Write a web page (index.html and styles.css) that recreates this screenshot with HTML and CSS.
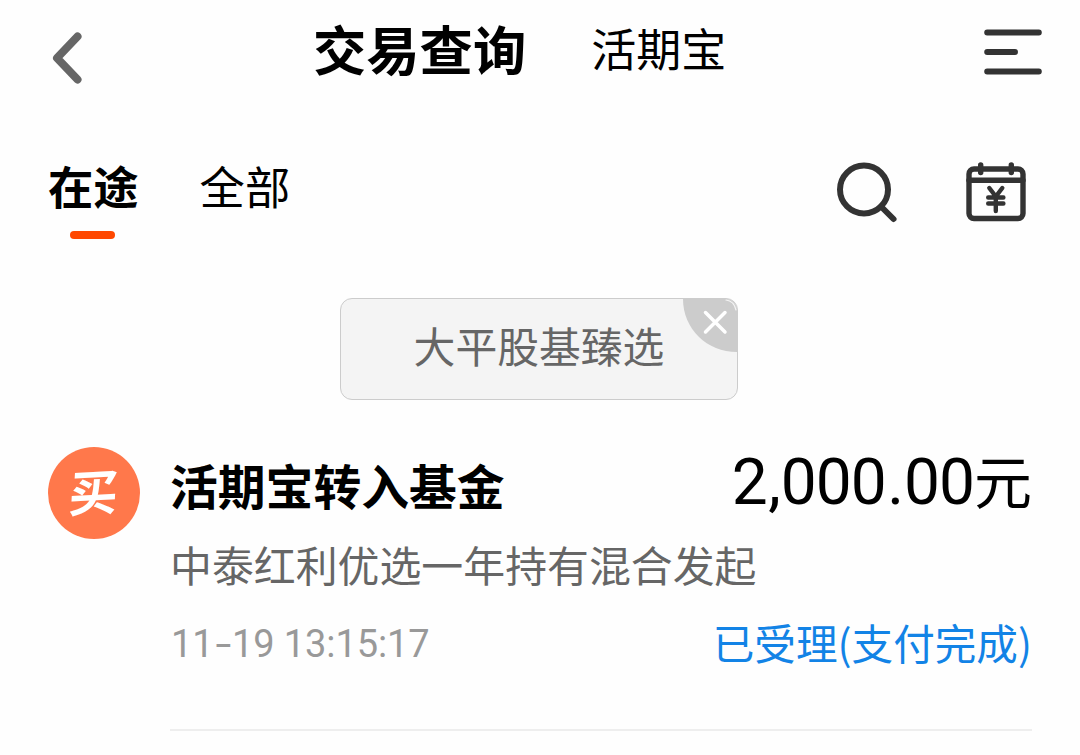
FILE: index.html
```html
<!DOCTYPE html>
<html lang="zh-CN">
<head>
    <meta charset="UTF-8">
    <meta name="viewport" content="width=device-width, initial-scale=1.0">
    <title>交易查询</title>
    <link rel="stylesheet" href="styles.css">
</head>
<body>

    <header class="header">
        <svg class="back" width="30" height="52" viewBox="0 0 30 52">
            <path d="M25.5 4.5 L5 26 L25.5 47.5" />
        </svg>
        <div class="titles">
            <h1>交易查询</h1>
            <span class="subtitle">活期宝</span>
        </div>
        <svg class="menu" width="58" height="46" viewBox="0 0 58 46">
            <path d="M3.2 3.5 H54.8 M3.2 23 H31 M3.2 42.5 H54.8" />
        </svg>
    </header>

    <nav class="tabs">
        <span class="tab active">在途</span>
        <span class="tab">全部</span>
        <div class="tools">
            <svg class="search" width="62" height="62" viewBox="0 0 62 62">
                <circle cx="28" cy="27.5" r="24" />
                <path d="M45 44.5 L57.5 57" />
            </svg>
            <svg class="calendar" width="60" height="60" viewBox="0 0 60 60">
                <rect x="3" y="7" width="54" height="49.5" rx="5" />
                <path d="M3 18.2 H57" />
                <path class="pin" d="M14.7 3 V10.5 M45.3 3 V10.5" />
                <path class="yen" d="M23.3 26 L29.8 34.5 L36.3 26 M29.8 34.5 V49 M22.2 35.5 H37.4 M22.2 41.5 H37.4" />
            </svg>
        </div>
    </nav>

    <main>
        <div class="filter">
            <span>大平股基臻选</span>
            <svg class="close" width="54" height="54" viewBox="0 0 54 54">
                <path class="corner" d="M0 0 H54 V53 C24 53 0 30 0 0 Z" />
                <path class="shine" d="M43 1 Q51 2 53 11" />
                <path class="cross" d="M22.5 13.5 L42 33 M42 13.5 L22.5 33" />
            </svg>
        </div>

        <section class="record">
            <div class="badge"><span>买</span></div>
            <div class="info">
                <div class="row">
                    <h2>活期宝转入基金</h2>
                    <span class="amount">2<span class="sep">,</span>000<span class="sep">.</span>00<span class="unit">元</span></span>
                </div>
                <p class="fund">中泰红利优选一年持有混合发起</p>
                <div class="row">
                    <span class="time">11<span class="dash">-</span>19 13:15:17</span>
                    <span class="status">已受理(支付完成)</span>
                </div>
            </div>
        </section>
    </main>

</body>
</html>
```
FILE: styles.css
```css
* {
    box-sizing: border-box;
}
body {
    margin: 0;
    background: #fefefe;
    color: #000;
    font-family: 'Noto Sans CJK SC', sans-serif;
    overflow: hidden;
}
h1, h2, p {
    margin: 0;
}
svg {
    display: block;
    fill: none;
    stroke: #333;
    stroke-linecap: round;
    stroke-linejoin: round;
}

/* Top bar */
.header {
    display: flex;
    align-items: flex-start;
    height: 140px;
    padding: 0 38px 0 52px;
}
.back {
    margin-top: 32px;
    stroke: #666;
    stroke-width: 8;
}
.titles {
    display: flex;
    align-items: center;
    height: 96px;
    margin-left: 231px;
}
h1 {
    font-size: 53.3px;
    line-height: 80px;
}
.subtitle {
    margin-left: 65px;
    font-size: 45px;
    line-height: 80px;
}
.menu {
    margin: 29px 0 0 auto;
    stroke-width: 6;
}

/* Tabs */
.tabs {
    display: flex;
    align-items: flex-start;
    height: 158px;
    padding: 14px 54px 0 48px;
}
.tab {
    margin-right: 61px;
    font-size: 45.3px;
    line-height: 62px;
}
.tab.active {
    font-weight: bold;
}
.tab.active::after {
    content: "";
    display: block;
    width: 45px;
    height: 8px;
    margin: 15px 0 0 22px;
    border-radius: 4px;
    background: #ff4800;
}
.tools {
    display: flex;
    gap: 68px;
    margin: 8px 0 0 auto;
}
.search {
    stroke-width: 6;
}
.calendar {
    stroke-width: 5.4;
}
.calendar .yen {
    stroke-width: 4.4;
}

/* Fund filter chip */
.filter {
    position: relative;
    width: 398px;
    height: 102px;
    margin-left: 340px;
    border: 1px solid #ccc;
    border-radius: 12px;
    background: #f4f4f4;
    color: #666;
    font-size: 41.8px;
    line-height: 92px;
    text-align: center;
    overflow: hidden;
}
.close {
    position: absolute;
    top: 0;
    right: 0;
}
.corner {
    fill: #ccc;
    stroke: none;
}
.shine {
    stroke: #f4f4f4;
    stroke-width: 1.2;
}
.cross {
    stroke: #fff;
    stroke-width: 3.5;
}

/* Trade record */
.record {
    display: flex;
    gap: 30px;
    margin-top: 47px;
    padding: 0 48px;
}
.badge {
    flex: none;
    width: 92px;
    height: 92px;
    border-radius: 50%;
    background: #ff784b;
    color: #fff;
    font-size: 49px;
    font-weight: bold;
    line-height: 86px;
    text-align: center;
}
.badge span {
    display: inline-block;
    transform: skew(-3deg, -3deg);
}
.info {
    flex: 1;
    height: 284px;
    border-bottom: 2px solid #eee;
}
.row {
    display: flex;
    justify-content: space-between;
    white-space: nowrap;
}
h2 {
    font-size: 47.8px;
    line-height: 76px;
}
.amount {
    font-family: Roboto, 'Noto Sans CJK SC', sans-serif;
    font-size: 64px;
    line-height: 71px;
    letter-spacing: -1px;
}
.sep {
    padding: 0 1px 0 1.5px;
}
.unit {
    font-size: 58px;
    letter-spacing: 0;
}
.fund {
    color: #666;
    font-size: 41.9px;
    line-height: 81px;
}
.time {
    padding-left: 1px;
    color: #999;
    font-family: Roboto, sans-serif;
    font-size: 38px;
    line-height: 80px;
    letter-spacing: -0.1px;
}
.dash {
    display: inline-block;
    padding: 0 4px;
    transform: scaleX(1.5);
}
.status {
    color: #1283e6;
    font-size: 41.6px;
    line-height: 77px;
}
```
